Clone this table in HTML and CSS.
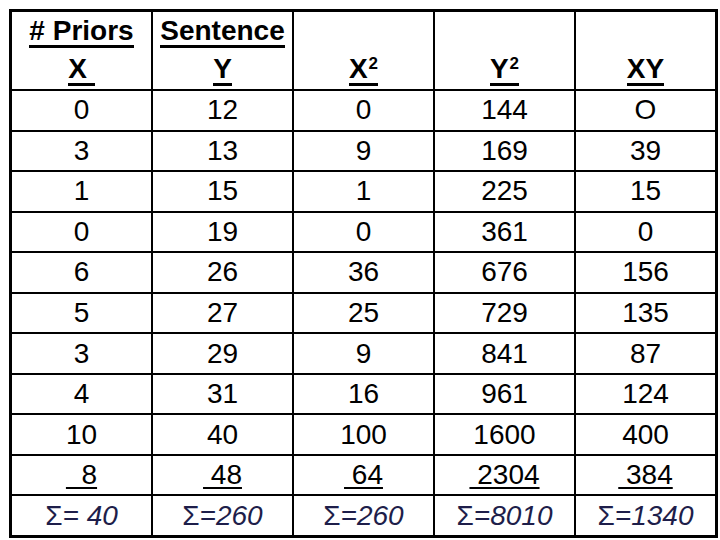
FILE: index.html
```html
<!DOCTYPE html>
<html>
<head>
<meta charset="utf-8">
<link rel="stylesheet" href="styles.css">
</head>
<body>
<div class="sheet">
  <div class="grid">
    <div class="cell head"><div class="hl"><span class="h">#&nbsp;Priors</span></div><div class="hl"><span class="h">X&nbsp;</span></div></div>
    <div class="cell head"><div class="hl"><span class="h">Sentence</span></div><div class="hl"><span class="h">Y</span></div></div>
    <div class="cell head"><div class="hl"></div><div class="hl"><span class="h">X<sup class="sq">2</sup></span></div></div>
    <div class="cell head"><div class="hl"></div><div class="hl"><span class="h">Y<sup class="sq">2</sup></span></div></div>
    <div class="cell head"><div class="hl"></div><div class="hl"><span class="h">XY</span></div></div>

    <div class="cell">0</div><div class="cell">12</div><div class="cell">0</div><div class="cell">144</div><div class="cell">O</div>
    <div class="cell">3</div><div class="cell">13</div><div class="cell">9</div><div class="cell">169</div><div class="cell">39</div>
    <div class="cell">1</div><div class="cell">15</div><div class="cell">1</div><div class="cell">225</div><div class="cell">15</div>
    <div class="cell">0</div><div class="cell">19</div><div class="cell">0</div><div class="cell">361</div><div class="cell">0</div>
    <div class="cell">6</div><div class="cell">26</div><div class="cell">36</div><div class="cell">676</div><div class="cell">156</div>
    <div class="cell">5</div><div class="cell">27</div><div class="cell">25</div><div class="cell">729</div><div class="cell">135</div>
    <div class="cell">3</div><div class="cell">29</div><div class="cell">9</div><div class="cell">841</div><div class="cell">87</div>
    <div class="cell">4</div><div class="cell">31</div><div class="cell">16</div><div class="cell">961</div><div class="cell">124</div>
    <div class="cell">10</div><div class="cell">40</div><div class="cell">100</div><div class="cell">1600</div><div class="cell">400</div>
    <div class="cell"><span class="u">&nbsp;&nbsp;8</span></div>
    <div class="cell"><span class="u">&nbsp;48</span></div>
    <div class="cell"><span class="u">&nbsp;64</span></div>
    <div class="cell"><span class="u">&nbsp;2304</span></div>
    <div class="cell"><span class="u">&nbsp;384</span></div>

    <div class="cell sum"><span class="sig">Σ</span><i>=&nbsp;40</i></div>
    <div class="cell sum"><span class="sig">Σ</span><i>=260</i></div>
    <div class="cell sum"><span class="sig">Σ</span><i>=260</i></div>
    <div class="cell sum"><span class="sig">Σ</span><i>=8010</i></div>
    <div class="cell sum"><span class="sig">Σ</span><i>=1340</i></div>
  </div>
</div>
</body>
</html>
```
FILE: styles.css
```css
html, body {
  margin: 0;
  padding: 0;
  background: #ffffff;
}
.sheet {
  width: 720px;
  height: 540px;
  padding: 9px 0 0 9px;
  box-sizing: border-box;
}
.grid {
  width: 709px;
  height: 529px;
  box-sizing: border-box;
  background: #000000;
  padding: 3px;
  display: grid;
  grid-template-columns: repeat(5, 1fr);
  grid-template-rows: 77px repeat(11, 1fr);
  column-gap: 2px;
  row-gap: 2px;
  font-family: "Liberation Sans", Arial, sans-serif;
  font-size: 28px;
  color: #000000;
}
.cell {
  background: #ffffff;
  display: flex;
  align-items: center;
  justify-content: center;
  line-height: 38px;
  white-space: pre;
}
.head {
  flex-direction: column;
  justify-content: flex-start;
  align-items: stretch;
  padding-top: 1px;
  font-weight: bold;
}
.hl {
  height: 41px;
  display: flex;
  align-items: center;
  justify-content: center;
}
.h {
  display: inline-block;
  line-height: 28px;
  border-bottom: 3px solid #000000;
}
.sq {
  font-size: 17px;
  font-weight: bold;
  line-height: 0;
  vertical-align: 9px;
  padding-left: 1px;
}
.u {
  text-decoration: underline;
  text-decoration-thickness: 2px;
  text-underline-offset: 3px;
}
.sum {
  color: #1e1e4a;
}
.sum i {
  font-style: italic;
}
```
